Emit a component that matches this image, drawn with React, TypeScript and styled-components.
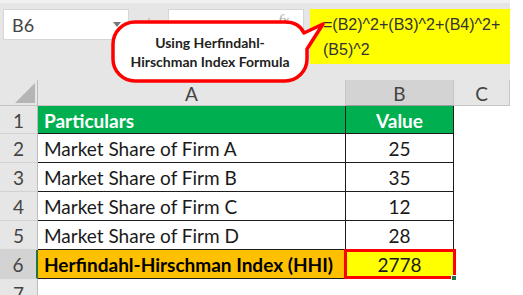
import React from 'react'
import styled, { createGlobalStyle } from 'styled-components'

const GlobalStyle = createGlobalStyle`
  html, body { margin: 0; padding: 0; background: #fff; }
  body { font-family: Lato, "Liberation Sans", sans-serif; }
`

const Page = styled.div`
  position: relative;
  width: 510px;
  height: 295px;
  overflow: hidden;
`

const Toolbar = styled.div`
  height: 80px;
  box-sizing: border-box;
  background: #e6e6e6;
  border-top: 3px solid #f1f1f1;
  padding: 6px 0 0 3px;
  display: flex;
  align-items: flex-start;
`

const NameBox = styled.div`
  width: 126px;
  height: 31px;
  box-sizing: border-box;
  background: #fff;
  border: 1px solid #d6d6d6;
  display: flex;
  align-items: center;
  justify-content: space-between;
  padding: 0 7px 0 8px;
  font-size: 18px;
  color: #444;
`

const DropArrow = styled.span`
  width: 0;
  height: 0;
  border-left: 4px solid transparent;
  border-right: 4px solid transparent;
  border-top: 5px solid #777;
`

const Grip = styled.div`
  width: 39px;
  height: 31px;
  display: flex;
  align-items: flex-start;
  justify-content: center;
  color: #b5b5b5;
  font-size: 12px;
  padding-top: 6px;
  box-sizing: border-box;
`

const FxBox = styled.div`
  width: 136px;
  height: 31px;
  box-sizing: border-box;
  background: #fff;
  border: 1px solid #d6d6d6;
  display: flex;
  justify-content: flex-end;
  padding: 2px 14px 0 0;
  font-family: "Liberation Serif", serif;
  font-style: italic;
  font-size: 15px;
  color: #a8a8a8;
`

const FormulaBox = styled.div`
  width: 200px;
  height: 55px;
  margin-left: 6px;
  box-sizing: border-box;
  background: #ffff00;
  padding: 3px 0 0 13px;
  font-family: "Liberation Sans", Arial, sans-serif;
  font-size: 16px;
  line-height: 25px;
  color: #333;
  white-space: nowrap;
`

const Sheet = styled.div`
  display: grid;
  grid-template-columns: 38px 308px 108px 56px;
  grid-template-rows: 26px 28px repeat(6, 29px);
  font-size: 19px;
`

const Corner = styled.div`
  background: #e6e6e6;
  border-right: 1px solid #bdbdbd;
  border-bottom: 1px solid #c4c4c4;
  box-sizing: border-box;
  display: flex;
  align-items: flex-end;
  justify-content: flex-end;
  padding: 0 2px 2px 0;
`

const ColHeader = styled.div<{ $selected?: boolean }>`
  background: ${p => (p.$selected ? '#d3d3d3' : '#e6e6e6')};
  border-right: 1px solid #c6c6c6;
  border-bottom: 1px solid ${p => (p.$selected ? '#9e9e9e' : '#c4c4c4')};
  box-sizing: border-box;
  display: flex;
  align-items: center;
  justify-content: center;
  color: #444;
  padding-top: 2px;
`

const RowHeader = styled.div<{ $selected?: boolean }>`
  background: ${p => (p.$selected ? '#d3d3d3' : '#e6e6e6')};
  border-right: ${p => (p.$selected ? '2px solid #217346' : '1px solid #bdbdbd')};
  border-bottom: 1px solid #d2d2d2;
  box-sizing: border-box;
  display: flex;
  align-items: center;
  justify-content: center;
  color: #444;
  padding-top: 1px;
`

const Cell = styled.div<{ $fill?: string; $center?: boolean; $bold?: boolean; $ink?: string }>`
  position: relative;
  background: ${p => p.$fill || '#fff'};
  border-right: 1px solid #1c1c1c;
  border-bottom: 1px solid #1c1c1c;
  box-sizing: border-box;
  display: flex;
  align-items: center;
  justify-content: ${p => (p.$center ? 'center' : 'flex-start')};
  padding: 1px 0 0 ${p => (p.$center ? '0' : '6px')};
  font-weight: ${p => (p.$bold ? 700 : 400)};
  color: ${p => p.$ink || '#1a1a1a'};
  white-space: nowrap;
`

const Blank = styled.div`
  background: #fff;
`

const Selection = styled.span`
  position: absolute;
  left: -2px;
  top: -1px;
  right: -3px;
  bottom: -1px;
  border: 3px solid #ff0000;
  pointer-events: none;
`

const FillHandle = styled.span`
  position: absolute;
  right: -4px;
  bottom: -3px;
  width: 4px;
  height: 4px;
  background: #217346;
  border: 1px solid #fff;
`

const CalloutShape = styled.svg`
  position: absolute;
  left: 0;
  top: 0;
  width: 340px;
  height: 100px;
  pointer-events: none;
`

const CalloutText = styled.div`
  position: absolute;
  left: 113px;
  top: 23px;
  width: 194px;
  height: 58px;
  display: flex;
  align-items: center;
  justify-content: center;
  text-align: center;
  font-size: 14px;
  line-height: 19px;
  font-weight: 700;
  color: #222;
`

const rows = [
  { label: 'Market Share of Firm A', value: '25' },
  { label: 'Market Share of Firm B', value: '35' },
  { label: 'Market Share of Firm C', value: '12' },
  { label: 'Market Share of Firm D', value: '28' },
]

export default function App() {
  return (
    <Page>
      <GlobalStyle />
      <Toolbar>
        <NameBox>
          <span>B6</span>
          <DropArrow />
        </NameBox>
        <Grip>⋮</Grip>
        <FxBox>fx</FxBox>
        <FormulaBox>
          =(B2)^2+(B3)^2+(B4)^2+
          <br />
          (B5)^2
        </FormulaBox>
      </Toolbar>

      <Sheet>
        <Corner>
          <svg width="20" height="20" viewBox="0 0 20 20">
            <polygon points="20,0 20,20 0,20" fill="#b5b5b5" />
          </svg>
        </Corner>
        <ColHeader>A</ColHeader>
        <ColHeader $selected>B</ColHeader>
        <ColHeader>C</ColHeader>

        <RowHeader>1</RowHeader>
        <Cell $fill="#00b050" $bold $ink="#fff">Particulars</Cell>
        <Cell $fill="#00b050" $bold $ink="#fff" $center>Value</Cell>
        <Blank />

        {rows.map((r, i) => (
          <React.Fragment key={r.label}>
            <RowHeader>{i + 2}</RowHeader>
            <Cell>{r.label}</Cell>
            <Cell $center>{r.value}</Cell>
            <Blank />
          </React.Fragment>
        ))}

        <RowHeader $selected>6</RowHeader>
        <Cell $fill="#ffc000" $bold $ink="#000">Herfindahl-Hirschman Index (HHI)</Cell>
        <Cell $fill="#ffff00" $center>
          2778
          <Selection />
          <FillHandle />
        </Cell>
        <Blank />

        <RowHeader>7</RowHeader>
        <Blank />
        <Blank />
        <Blank />
      </Sheet>

      <CalloutShape viewBox="0 0 340 100">
        <path
          d="M 135 22 H 285 Q 299 22 304 33 L 323 24 L 307 49 V 59 A 22 22 0 0 1 285 81 H 135 A 22 22 0 0 1 113 59 V 44 A 22 22 0 0 1 135 22 Z"
          fill="#fff"
          stroke="#ff0000"
          strokeWidth="3.5"
          strokeLinejoin="round"
        />
      </CalloutShape>
      <CalloutText>
        Using Herfindahl-
        <br />
        Hirschman Index Formula
      </CalloutText>
    </Page>
  )
}
